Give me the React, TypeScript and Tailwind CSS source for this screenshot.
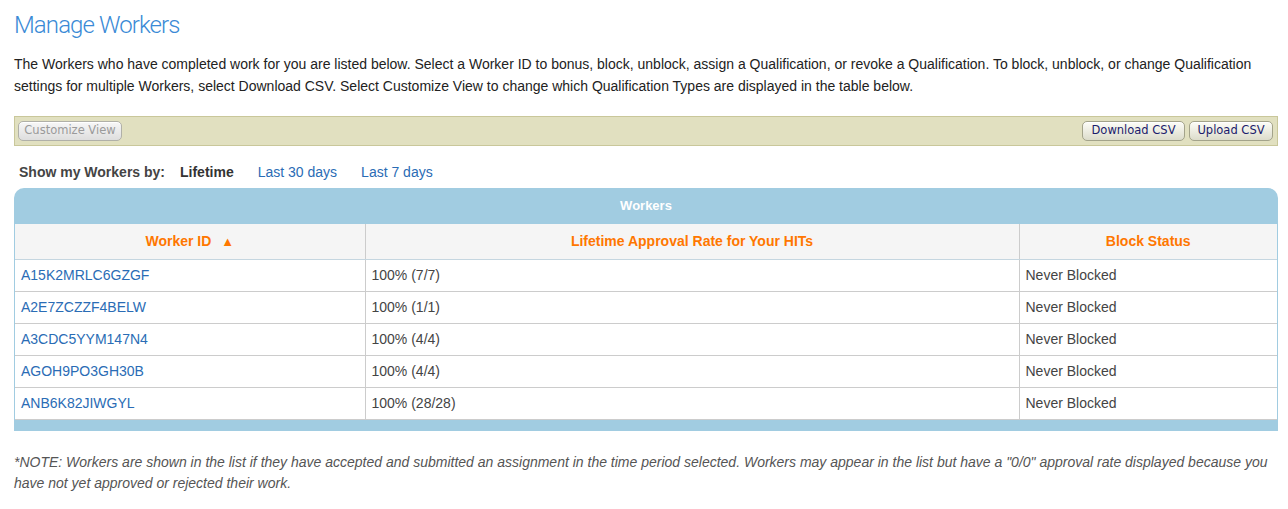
import React from "react";

const rows = [
  ["A15K2MRLC6GZGF", "100% (7/7)"],
  ["A2E7ZCZZF4BELW", "100% (1/1)"],
  ["A3CDC5YYM147N4", "100% (4/4)"],
  ["AGOH9PO3GH30B", "100% (4/4)"],
  ["ANB6K82JIWGYL", "100% (28/28)"],
];

const btn =
  "h-[20px] rounded-[5px] border whitespace-nowrap bg-gradient-to-b text-[11.5px] leading-none shadow-[inset_0_1px_0_#fff] font-['DejaVu_Sans',sans-serif]";

export default function App() {
  return (
    <div className="w-[1288px] h-[509px] bg-white pl-[14px] pr-[10px] pt-[10px] text-[#222] font-['Liberation_Sans',Arial,sans-serif] text-[14px]">
      <h1 className="text-[24px] leading-[30px] font-light tracking-[-0.9px] text-[#3a8ad6] font-['Roboto',sans-serif]">
        Manage Workers
      </h1>
      <p className="mt-[13px] leading-[22px] text-[#222]">
        The Workers who have completed work for you are listed below. Select a Worker ID to bonus, block, unblock, assign a Qualification, or revoke a Qualification. To block, unblock, or change Qualification
        <br />
        settings for multiple Workers, select Download CSV. Select Customize View to change which Qualification Types are displayed in the table below.
      </p>
      <div className="mt-[19px] h-[30px] border border-[#c9c79a] bg-[#e1e0c0] flex items-center justify-between px-[3px]">
        <button className={btn + " w-[104px] text-[#9a9a9a] border-[#b0b0a8] from-[#f7f7f7] to-[#dedede]"}>
          Customize View
        </button>
        <div className="flex gap-[4px] mr-[1px]">
          <button className={btn + " w-[103px] text-[#1b1b6b] border-[#a3a38a] from-[#fdfdf8] to-[#dcdccb]"}>Download CSV</button>
          <button className={btn + " w-[84px] text-[#1b1b6b] border-[#a3a38a] from-[#fdfdf8] to-[#dcdccb]"}>Upload CSV</button>
        </div>
      </div>
      <div className="mt-[17px] ml-[5px] flex items-center text-[14px] leading-[18px]">
        <span className="font-bold text-[#444]">Show my Workers by:</span>
        <span className="ml-[15px] font-bold text-[#333]">Lifetime</span>
        <span className="ml-[24px] text-[#2a6cb5]">Last 30 days</span>
        <span className="ml-[24px] text-[#2a6cb5]">Last 7 days</span>
      </div>
      <div className="mt-[7px] rounded-t-[10px] bg-[#a1cce1] px-[1px] pb-[11px]">
        <div className="h-[36px] flex items-center justify-center text-white font-bold text-[13px]">Workers</div>
        <table className="w-full border-collapse bg-white">
          <thead>
            <tr className="h-[35px] bg-[#f5f5f5] text-[#ff7700] font-bold text-[14px]">
              <th className="w-[350px] border-r border-[#cccccc] border-b border-b-[#c5d6e0] font-bold">
                Worker ID <span className="ml-[6px] text-[13px] text-[#ff7700]">▲</span>
              </th>
              <th className="w-[654px] border-r border-[#cccccc] border-b border-b-[#c5d6e0] font-bold">Lifetime Approval Rate for Your HITs</th>
              <th className="border-b border-b-[#c5d6e0] font-bold">Block Status</th>
            </tr>
          </thead>
          <tbody>
            {rows.map((r) => (
              <tr key={r[0]} className="h-[32px] text-[14px] border-b border-[#cccccc]">
                <td className="pl-[6px] text-[#2a6cb5] border-r border-[#cccccc]">{r[0]}</td>
                <td className="pl-[6px] text-[#444] border-r border-[#cccccc]">{r[1]}</td>
                <td className="pl-[6px] text-[#444]">Never Blocked</td>
              </tr>
            ))}
          </tbody>
        </table>
      </div>
      <p className="mt-[21px] italic text-[#555] leading-[21px] text-[14px]">
        *NOTE: Workers are shown in the list if they have accepted and submitted an assignment in the time period selected. Workers may appear in the list but have a "0/0" approval rate displayed because you
        <br />
        have not yet approved or rejected their work.
      </p>
    </div>
  );
}
